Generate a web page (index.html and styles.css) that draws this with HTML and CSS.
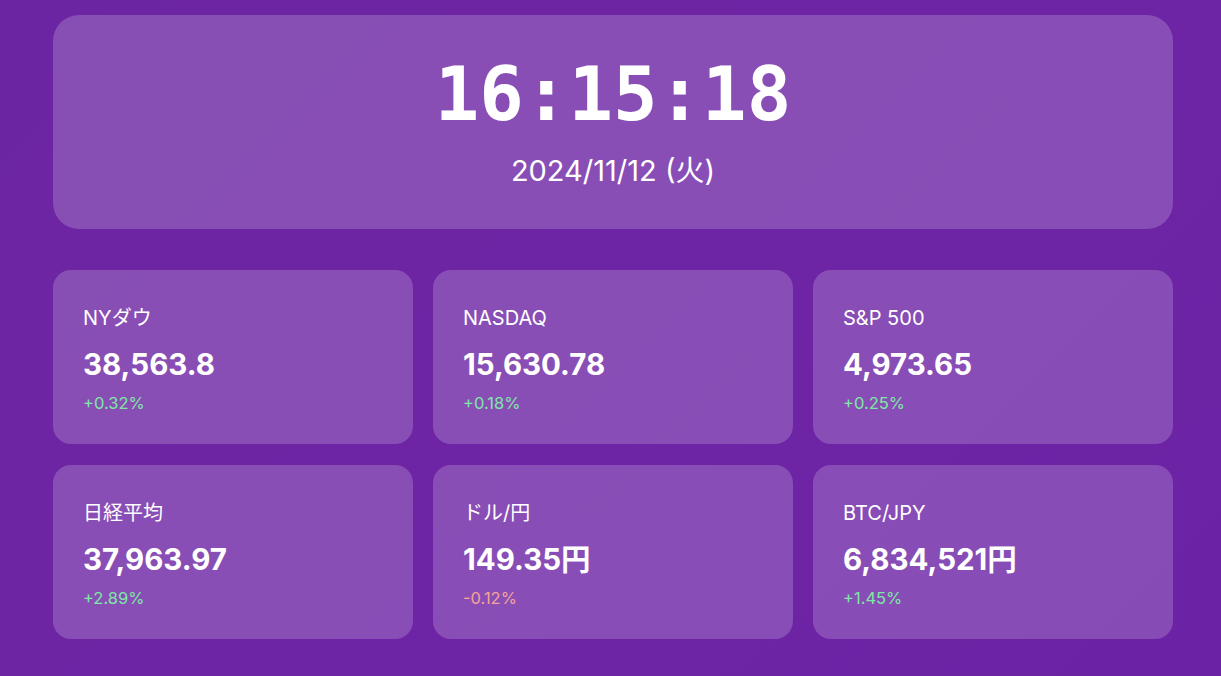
FILE: index.html
```html
<!DOCTYPE html>
<html lang="ja">
<head>
<meta charset="utf-8">
<title>Market Clock</title>
<link rel="stylesheet" href="styles.css">
</head>
<body>
<main class="wrap">
  <section class="clock-card">
    <div class="time">16:15:18</div>
    <div class="date">2024/11/12 (火)</div>
  </section>
  <section class="grid">
    <div class="card">
      <div class="label">NYダウ</div>
      <div class="value">38,563.8</div>
      <div class="change up">+0.32%</div>
    </div>
    <div class="card">
      <div class="label">NASDAQ</div>
      <div class="value">15,630.78</div>
      <div class="change up">+0.18%</div>
    </div>
    <div class="card">
      <div class="label">S&amp;P 500</div>
      <div class="value">4,973.65</div>
      <div class="change up">+0.25%</div>
    </div>
    <div class="card">
      <div class="label">日経平均</div>
      <div class="value">37,963.97</div>
      <div class="change up">+2.89%</div>
    </div>
    <div class="card">
      <div class="label">ドル/円</div>
      <div class="value">149.35円</div>
      <div class="change down">-0.12%</div>
    </div>
    <div class="card">
      <div class="label">BTC/JPY</div>
      <div class="value">6,834,521円</div>
      <div class="change up">+1.45%</div>
    </div>
  </section>
</main>
</body>
</html>
```

FILE: styles.css
```css
html, body {
  margin: 0;
  padding: 0;
}
body {
  width: 1221px;
  height: 676px;
  overflow: hidden;
  background: linear-gradient(135deg, #6c25a2 0%, #6e25a5 50%, #6b22a4 100%);
  font-family: Inter, "Noto Sans CJK JP", sans-serif;
  color: #ffffff;
}
.wrap {
  width: 1120px;
  margin: 0 0 0 53px;
  padding-top: 15px;
}
.clock-card {
  height: 214px;
  box-sizing: border-box;
  border-radius: 26px;
  background: rgba(255, 255, 255, 0.19);
  display: flex;
  flex-direction: column;
  align-items: center;
  padding-top: 33px;
}
.time {
  font-family: "DejaVu Sans Mono", monospace;
  font-weight: bold;
  font-size: 74px;
  line-height: 92px;
  letter-spacing: 0;
}
.date {
  font-size: 29px;
  line-height: 36px;
  margin-top: 13px;
}
.grid {
  margin-top: 41px;
  display: grid;
  grid-template-columns: repeat(3, 1fr);
  column-gap: 20px;
  row-gap: 21px;
}
.card {
  height: 174px;
  box-sizing: border-box;
  border-radius: 18px;
  background: rgba(255, 255, 255, 0.19);
  padding: 34px 30px 0;
}
.label {
  font-size: 20px;
  line-height: 28px;
}
.value {
  font-size: 29.5px;
  font-weight: 700;
  line-height: 36px;
  margin-top: 14px;
}
.change {
  font-size: 16.5px;
  line-height: 22px;
  margin-top: 10px;
}
.up { color: #7ee8a4; }
.down { color: #f6a39a; }
```
